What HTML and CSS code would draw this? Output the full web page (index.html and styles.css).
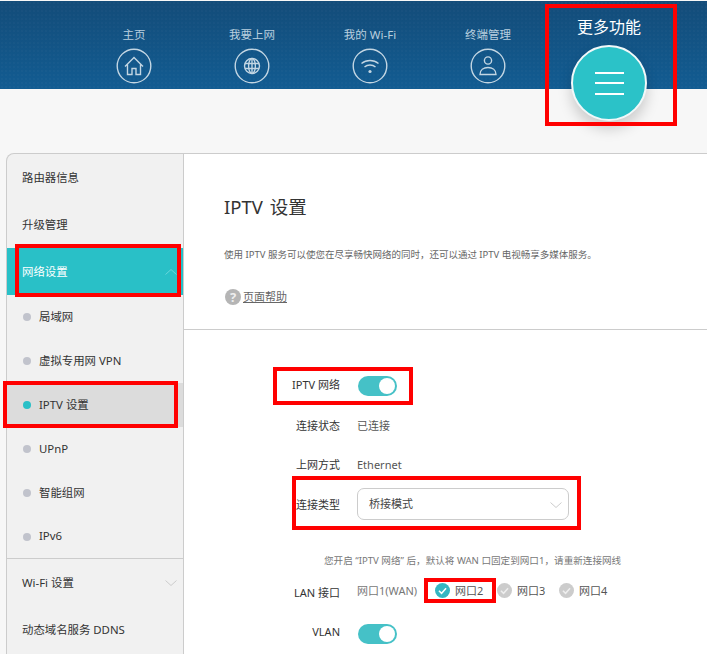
FILE: index.html
```html
<!DOCTYPE html>
<html lang="zh-CN">
<head>
  <meta charset="UTF-8" />
  <title>IPTV 设置</title>
  <link rel="stylesheet" href="styles.css">
</head>
<body>

<header class="topbar">
  <nav class="topnav">
    <a class="topnav-item">
      <span class="topnav-label">主页</span>
      <svg class="topnav-icon" viewBox="0 0 36 36">
        <circle cx="18" cy="18" r="16.8"/>
        <path d="M9 18.5 18 9.5l9 9M11.5 16.5V26.5H16V20.5h4v6h4.5V16.5"/>
      </svg>
    </a>
    <a class="topnav-item">
      <span class="topnav-label">我要上网</span>
      <svg class="topnav-icon" viewBox="0 0 36 36">
        <circle cx="18" cy="18" r="16.8"/>
        <circle cx="18" cy="18" r="7.5"/>
        <ellipse cx="18" cy="18" rx="3.4" ry="7.5"/>
        <path d="M18 10.5v15M11 15.5h14M11 20.5h14"/>
      </svg>
    </a>
    <a class="topnav-item">
      <span class="topnav-label">我的 Wi-Fi</span>
      <svg class="topnav-icon" viewBox="0 0 36 36">
        <circle cx="18" cy="18" r="16.8"/>
        <path d="M9.5 15.5c4.8-4 12.2-4 17 0M12.5 19c3-2.6 8-2.6 11 0"/>
        <circle class="fill" cx="18" cy="23.5" r="1.6"/>
      </svg>
    </a>
    <a class="topnav-item">
      <span class="topnav-label">终端管理</span>
      <svg class="topnav-icon" viewBox="0 0 36 36">
        <circle cx="18" cy="18" r="16.8"/>
        <circle cx="18" cy="12.5" r="3.6"/>
        <path d="M10 26.5c0-4.6 3.6-7 8-7s8 2.4 8 7z"/>
      </svg>
    </a>
    <a class="topnav-item topnav-more">
      <span class="more-label">更多功能</span>
      <span class="more-button">
        <span class="more-bar"></span>
        <span class="more-bar"></span>
        <span class="more-bar"></span>
      </span>
    </a>
  </nav>
</header>

<div class="panel">
  <aside class="sidebar">
    <div class="menu-row">路由器信息</div>
    <div class="menu-row">升级管理</div>
    <div class="menu-row menu-open">
      网络设置
      <svg class="chevron" viewBox="0 0 12 6"><path d="M.5 5.5 6 .5l5.5 5"/></svg>
    </div>
    <div class="submenu">
      <div class="submenu-row">局域网</div>
      <div class="submenu-row">虚拟专用网 VPN</div>
      <div class="submenu-row submenu-active">IPTV 设置</div>
      <div class="submenu-row">UPnP</div>
      <div class="submenu-row">智能组网</div>
      <div class="submenu-row">IPv6</div>
    </div>
    <div class="menu-row">
      Wi-Fi 设置
      <svg class="chevron" viewBox="0 0 12 6"><path d="M.5.5 6 5.5l5.5-5"/></svg>
    </div>
    <div class="menu-row">动态域名服务 DDNS</div>
  </aside>

  <main class="content">
    <section class="intro">
      <h1>IPTV 设置</h1>
      <p class="intro-text">使用 IPTV 服务可以使您在尽享畅快网络的同时，还可以通过 IPTV 电视畅享多媒体服务。</p>
      <a class="help-link"><span class="help-icon">?</span><span class="help-text">页面帮助</span></a>
    </section>

    <section class="form">
      <div class="form-row">
        <span class="form-label form-label-up">IPTV 网络</span>
        <span class="toggle"></span>
      </div>
      <div class="form-row form-row-status">
        <span class="form-label">连接状态</span>
        <span class="form-value">已连接</span>
      </div>
      <div class="form-row">
        <span class="form-label">上网方式</span>
        <span class="form-value">Ethernet</span>
      </div>
      <div class="form-row">
        <span class="form-label">连接类型</span>
        <div class="select">
          桥接模式
          <svg class="select-arrow" viewBox="0 0 12 6"><path d="M.5.5 6 5.5l5.5-5"/></svg>
        </div>
      </div>
      <p class="form-note">您开启 “IPTV 网络” 后，默认将 WAN 口固定到网口1，请重新连接网线</p>
      <div class="form-row form-row-lan">
        <span class="form-label">LAN 接口</span>
        <div class="ports">
          <span class="port-wan">网口1(WAN)</span>
          <span class="port port-on">
            <svg class="port-check" viewBox="0 0 16 16"><circle cx="8" cy="8" r="8"/><path d="M4.2 8.2 7 11l4.8-5.4"/></svg>
            网口2
          </span>
          <span class="port">
            <svg class="port-check" viewBox="0 0 16 16"><circle cx="8" cy="8" r="8"/><path d="M4.2 8.2 7 11l4.8-5.4"/></svg>
            网口3
          </span>
          <span class="port">
            <svg class="port-check" viewBox="0 0 16 16"><circle cx="8" cy="8" r="8"/><path d="M4.2 8.2 7 11l4.8-5.4"/></svg>
            网口4
          </span>
        </div>
      </div>
      <div class="form-row form-row-vlan">
        <span class="form-label form-label-up">VLAN</span>
        <span class="toggle"></span>
      </div>
    </section>
  </main>
</div>

<!-- red annotation boxes drawn over the screenshot -->
<div class="mark mark-more"></div>
<div class="mark mark-network"></div>
<div class="mark mark-iptv"></div>
<div class="mark mark-switch"></div>
<div class="mark mark-type"></div>
<div class="mark mark-port"></div>

</body>
</html>
```

FILE: styles.css
```css
html, body {
  height: 654px;
  overflow: hidden;
}

body {
  position: relative;
  margin: 0;
  background-color: #f7f7f7;
  color: #333;
  font-family: "Noto Sans", "Noto Sans CJK SC", sans-serif;
  font-size: 11px;
}

/* top bar */
.topbar {
  height: 88px;
  margin-top: 1px;
  background:
    radial-gradient(rgba(255,255,255,0.02) 1px, transparent 1.2px) 0 0 / 4px 4px,
    linear-gradient(#134c79, #125c92);
}

.topnav {
  display: flex;
  padding-left: 75px;
}

.topnav-item {
  display: flex;
  flex-direction: column;
  align-items: center;
  width: 118px;
  color: #b9cfdf;
}

.topnav-label {
  margin-top: 26px;
  font-size: 11.5px;
  line-height: 16px;
}

.topnav-icon {
  width: 36px;
  height: 36px;
  margin-top: 5px;
  fill: none;
  stroke: #c3d6e3;
  stroke-width: 1.4;
}

.topnav-icon .fill {
  fill: #c3d6e3;
  stroke: none;
}

.topnav-more {
  width: 124px;
  color: #fff;
}

.more-label {
  margin-top: 15px;
  font-size: 16px;
  line-height: 22px;
}

.more-button {
  display: flex;
  flex-direction: column;
  align-items: center;
  justify-content: center;
  gap: 8.5px;
  box-sizing: border-box;
  width: 76px;
  height: 76px;
  margin-top: 7px;
  background-color: #2bc2c8;
  border: 2px solid #f1f8f9;
  border-radius: 50%;
  box-shadow: 0 8px 14px rgba(0,0,0,0.18);
}

.more-bar {
  width: 29px;
  height: 2px;
  background-color: #fff;
}

/* panel below the top bar */
.panel {
  display: flex;
  height: 501px;
  margin: 64px 0 0 6px;
}

.sidebar {
  flex: none;
  box-sizing: border-box;
  width: 178px;
  background-color: #f1f1f1;
  border: 1px solid #ccc;
  border-bottom: none;
  border-top-left-radius: 8px;
  font-size: 11.4px;
}

.menu-row {
  position: relative;
  height: 47px;
  padding-left: 15px;
  line-height: 47px;
  color: #333;
}

.menu-open {
  background-color: #29c0c7;
  color: #fff;
}

.chevron {
  position: absolute;
  top: 21px;
  right: 6px;
  width: 12px;
  height: 6px;
  fill: none;
  stroke: #ccc;
}

.menu-open .chevron {
  stroke: #6ad5da;
}

.submenu {
  border-bottom: 1px solid #ccc;
}

.submenu-row {
  display: flex;
  align-items: center;
  box-sizing: border-box;
  height: 44px;
  padding: 0 0 2px 32px;
  position: relative;
}

.submenu-row:last-child {
  height: 43px;
}

.submenu-row:before {
  content: "";
  position: absolute;
  left: 16px;
  top: 18px;
  width: 8px;
  height: 8px;
  border-radius: 50%;
  background-color: #c1c3cc;
}

.submenu-active {
  background-color: #dcdcdc;
}

.submenu-active:before {
  background-color: #29c0c7;
}

/* main column */
.content {
  flex: 1;
  background-color: #fff;
  border-top: 1px solid #ccc;
}

.intro {
  box-sizing: border-box;
  height: 176px;
  padding: 40px 0 0 40px;
  border-bottom: 1px solid #ccc;
}

.intro h1 {
  margin: 0;
  font-size: 18.5px;
  font-weight: 400;
  line-height: 26px;
  word-spacing: 2px;
  color: #333;
}

.intro-text {
  margin: 27px 0 0;
  font-size: 9.5px;
  line-height: 16px;
  color: #666;
  white-space: nowrap;
}

.help-link {
  display: flex;
  align-items: center;
  gap: 2px;
  margin-top: 26px;
  line-height: 16px;
  color: #666;
}

.help-icon {
  width: 16px;
  height: 16px;
  margin-left: 1px;
  border-radius: 50%;
  background-color: #b5b5b5;
  color: #eee;
  font-size: 13px;
  font-weight: 700;
  text-align: center;
}

.help-text {
  text-decoration: underline;
}

.form {
  padding-top: 36px;
}

.form-row {
  display: flex;
  align-items: center;
  gap: 17px;
  height: 40px;
}

.form-row-status {
  height: 38px;
}

.form-row-lan {
  height: 38px;
}

.form-row-vlan {
  height: 46px;
}

.form-label {
  width: 156px;
  text-align: right;
}

.form-label-up {
  padding-bottom: 5px;
}

.form-value {
  color: #555;
}

.toggle {
  position: relative;
  box-sizing: border-box;
  width: 39px;
  height: 20px;
  margin-left: 1px;
  background-color: #45c1c7;
  border-radius: 10px;
}

.toggle:after {
  content: "";
  position: absolute;
  top: 2px;
  right: 2px;
  width: 16px;
  height: 16px;
  border-radius: 50%;
  background-color: #fff;
}

.select {
  position: relative;
  box-sizing: border-box;
  width: 212px;
  height: 32px;
  padding-left: 11px;
  line-height: 30px;
  border: 1px solid #ccc;
  border-radius: 7px;
  color: #444;
}

.select-arrow {
  position: absolute;
  top: 13px;
  right: 6px;
  width: 12px;
  height: 6px;
  fill: none;
  stroke: #ccc;
}

.form-note {
  margin: 29px 0 4px 140px;
  font-size: 9.6px;
  line-height: 16px;
  color: #777;
  white-space: nowrap;
}

.ports {
  display: flex;
  align-items: center;
  padding-bottom: 4px;
  color: #777;
}

.port-wan {
  width: 78px;
}

.port {
  display: flex;
  align-items: center;
  gap: 5px;
  width: 62px;
  color: #555;
}

.port-check {
  flex: none;
  width: 15px;
  height: 15px;
  fill: #ccc;
  stroke: none;
}

.port-check path {
  fill: none;
  stroke: #eee;
  stroke-width: 1.6;
}

.port-on .port-check {
  fill: #35b6c2;
}

.port-on .port-check path {
  stroke: #fff;
}

/* annotations */
.mark {
  position: absolute;
  box-sizing: border-box;
  border: 4px solid #f00;
}

.mark-more {
  left: 545px;
  top: 4px;
  width: 132px;
  height: 122px;
}

.mark-network {
  left: 15px;
  top: 244px;
  width: 166px;
  height: 53px;
}

.mark-iptv {
  left: 3px;
  top: 381px;
  width: 175px;
  height: 47px;
}

.mark-switch {
  left: 273px;
  top: 367px;
  width: 140px;
  height: 38px;
}

.mark-type {
  left: 292px;
  top: 476px;
  width: 289px;
  height: 54px;
}

.mark-port {
  left: 424px;
  top: 578px;
  width: 72px;
  height: 25px;
}
```
